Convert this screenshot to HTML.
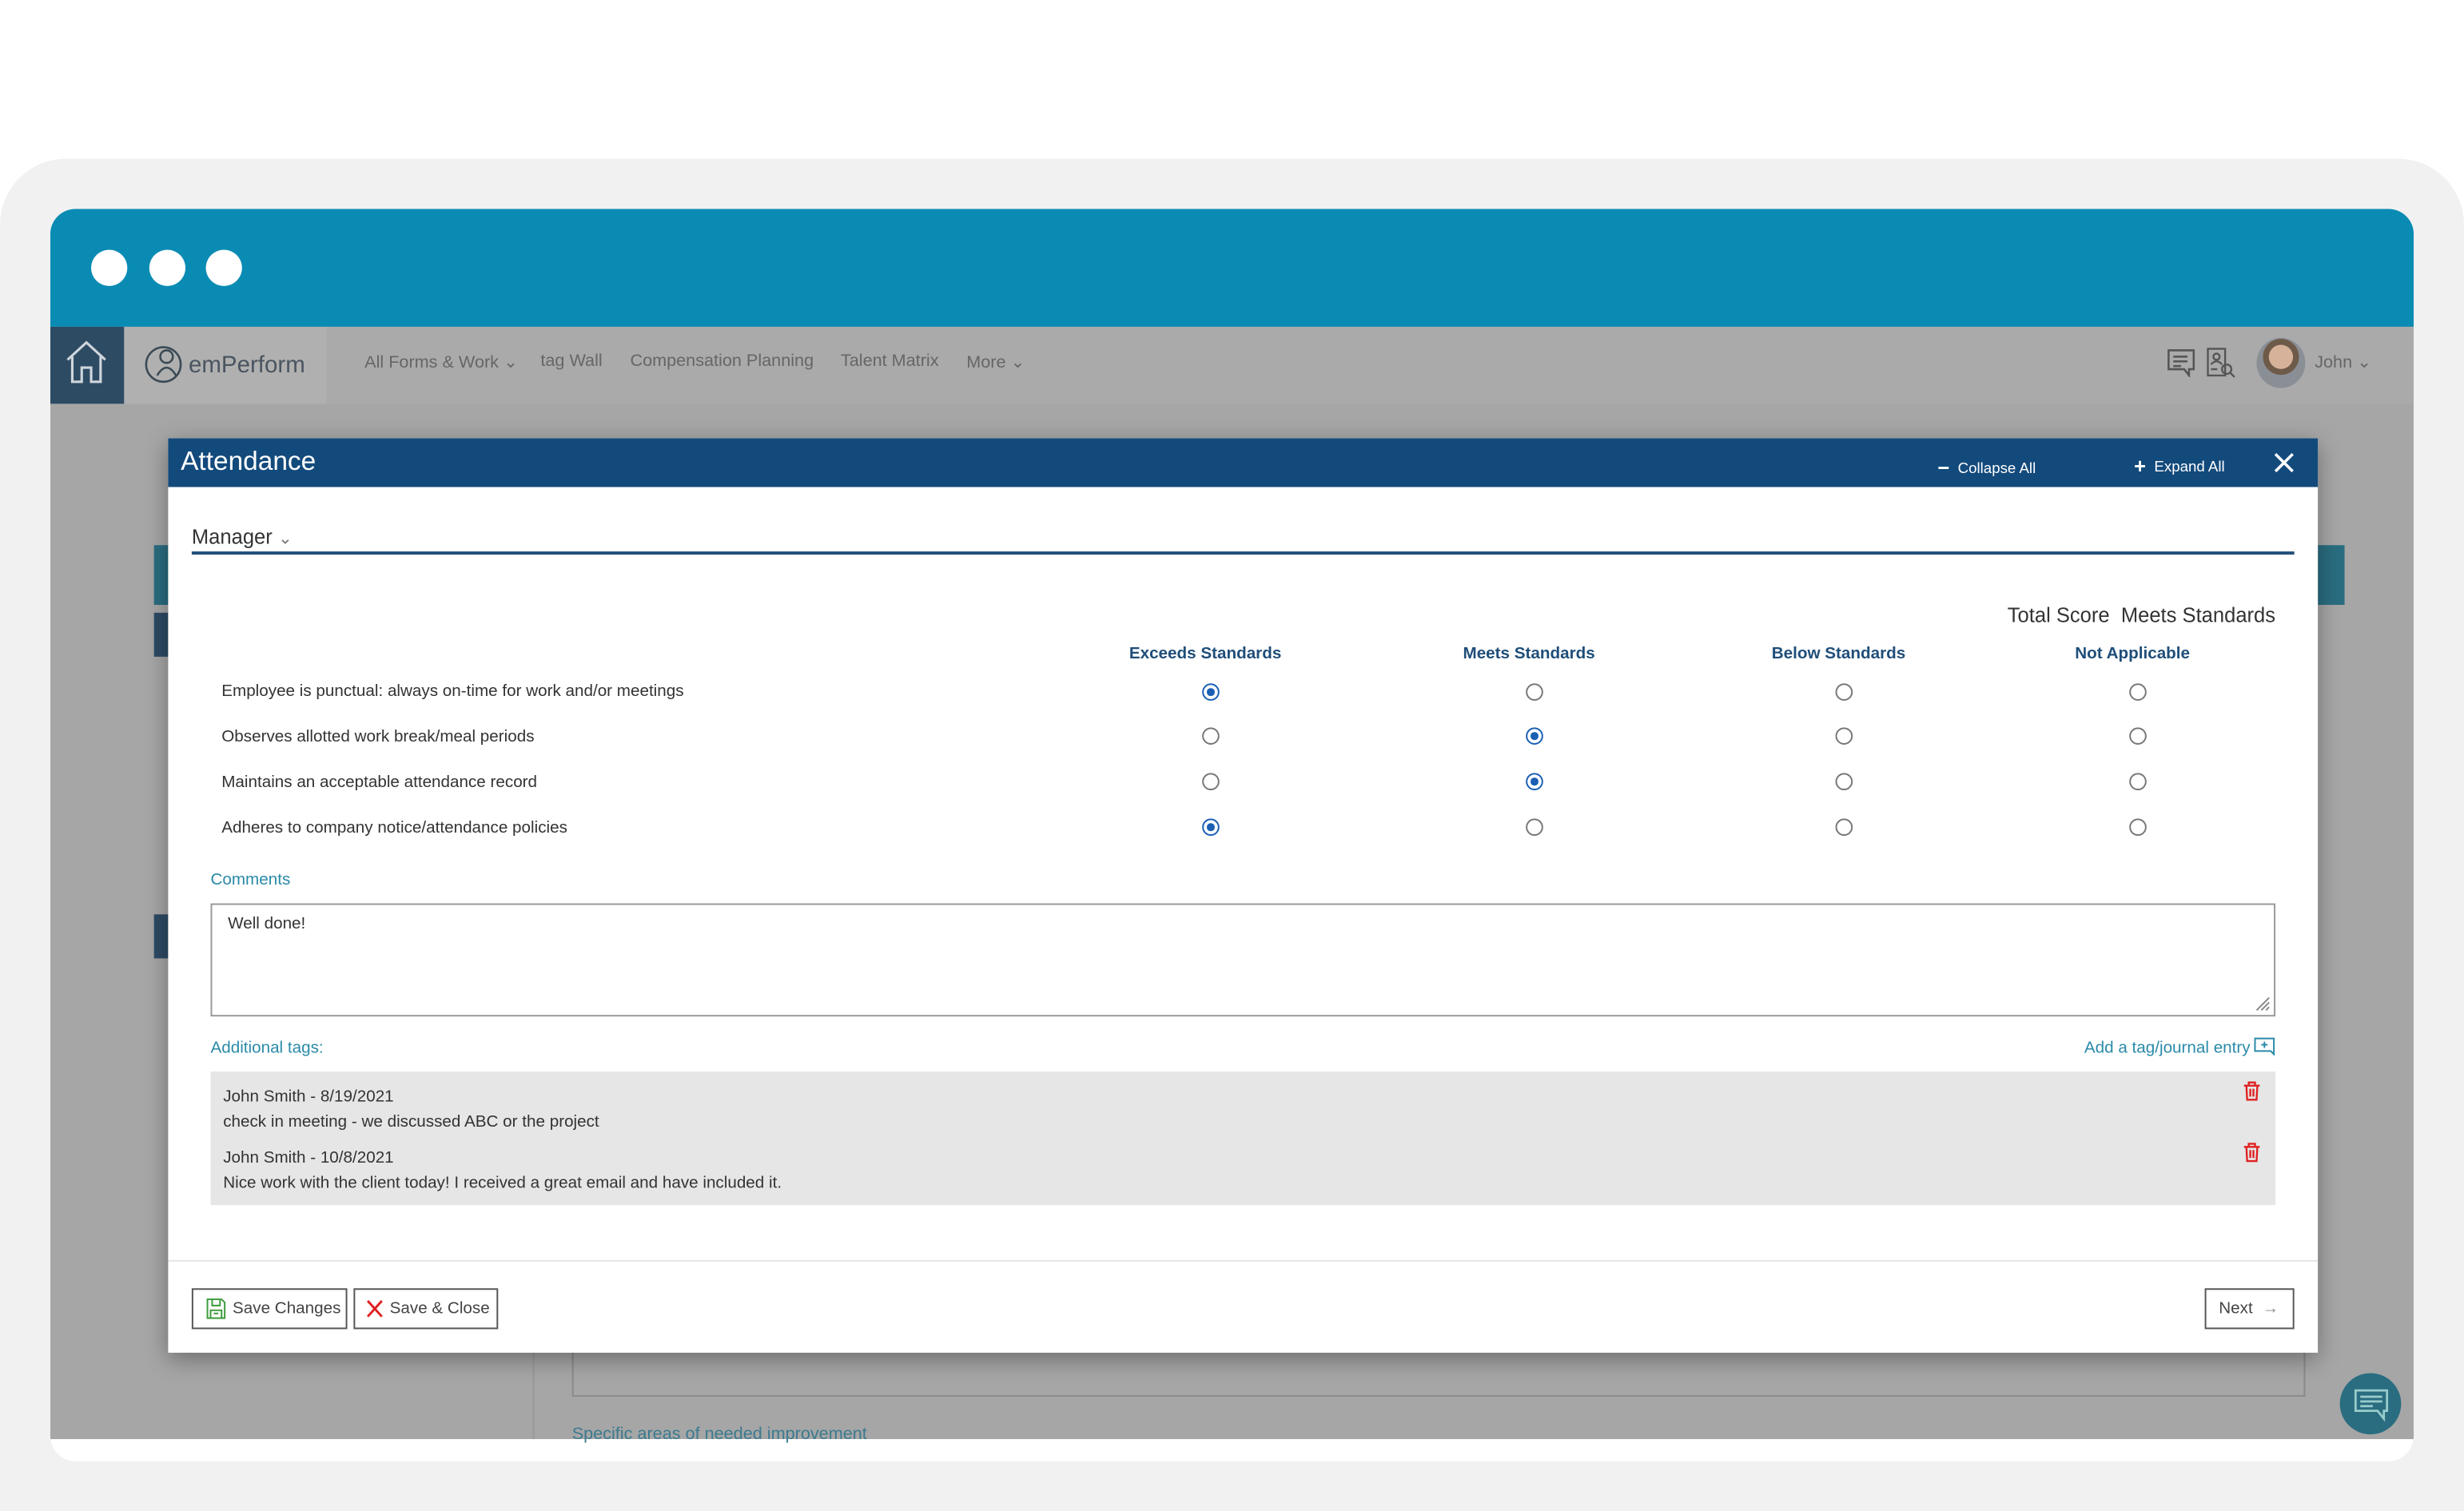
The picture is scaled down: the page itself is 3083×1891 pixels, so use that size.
<!DOCTYPE html>
<html><head><meta charset="utf-8"><style>
*{margin:0;padding:0;box-sizing:border-box}
html,body{width:3083px;height:1891px;overflow:hidden;background:#fff;font-family:"Liberation Sans",sans-serif}
#s{position:absolute;left:0;top:0;width:1568px;height:962px;transform:scale(1.96620);transform-origin:0 0}
.a{position:absolute}
.t{position:absolute;white-space:nowrap}
.r{position:absolute;width:11px;height:11px;border:1.3px solid #777;border-radius:50%;background:#fff}
.r.on{border-color:#1a5fb4}
.r.on:after{content:"";position:absolute;left:2px;top:2px;width:4.5px;height:4.5px;border-radius:50%;background:#1a5fb4}
.btn{position:absolute;border:1px solid #555;background:#fff;height:26px;font-size:10.5px;color:#444;display:flex;align-items:center}
</style></head><body><div id="s">
<div class="a" style="left:0;top:101px;width:1568px;height:861px;background:#f1f1f1;border-radius:42px 42px 0 0"></div>
<div class="a" style="left:32px;top:133px;width:1504px;height:797px;background:#fff;border-radius:16px;overflow:hidden">
  <div class="a" style="left:0;top:0;width:1504px;height:75px;background:#0a8bb3"></div>
  <div class="a" style="left:0;top:75px;width:1504px;height:708px;background:#a6a6a6"></div>
  <div class="a" style="left:0;top:75px;width:1504px;height:49px;background:#aaaaaa"></div>
  <div class="a" style="left:0;top:75px;width:47px;height:49px;background:#2e4b64"></div>
  <div class="a" style="left:47px;top:75px;width:129px;height:49px;background:#b0b0b0"></div>
</div>
<div class="a" style="left:58px;top:159px;width:23px;height:23px;border-radius:50%;background:#fff"></div>
<div class="a" style="left:95px;top:159px;width:23px;height:23px;border-radius:50%;background:#fff"></div>
<div class="a" style="left:131px;top:159px;width:23px;height:23px;border-radius:50%;background:#fff"></div>
<svg class="a" style="left:41px;top:216px" width="28" height="30" viewBox="0 0 28 30" fill="none" stroke="#cfd6dc" stroke-width="1.6"><path d="M2 13 L14 2 L26 13 M5 11 V27 H11 V18 H17 V27 H23 V11"/></svg>
<svg class="a" style="left:91px;top:219px" width="30" height="26" viewBox="0 0 30 26" fill="none" stroke="#3a4a55" stroke-width="1.3"><circle cx="13" cy="13" r="11"/><circle cx="15" cy="8" r="4"/><path d="M9 20 q6 -10 12 0"/></svg>
<div class="t" style="left:120px;top:224px;font-size:15px;color:#4a5560">emPerform</div>
<div class="t" style="left:232px;top:224px;font-size:11px;color:#666">All Forms &amp; Work ⌄</div>
<div class="t" style="left:344px;top:224px;font-size:11px;color:#666">tag Wall</div>
<div class="t" style="left:401px;top:224px;font-size:11px;color:#666">Compensation Planning</div>
<div class="t" style="left:535px;top:224px;font-size:11px;color:#666">Talent Matrix</div>
<div class="t" style="left:615px;top:224px;font-size:11px;color:#666">More ⌄</div>
<svg class="a" style="left:1379px;top:222px" width="18" height="18" viewBox="0 0 18 18" fill="none" stroke="#555" stroke-width="1.3"><path d="M1 1 H17 V13 H14 V17 L11 13 H1 Z M4 5 H13 M4 8 H13 M4 11 H9"/></svg>
<svg class="a" style="left:1404px;top:221px" width="20" height="20" viewBox="0 0 20 20" fill="none" stroke="#555" stroke-width="1.2"><rect x="1" y="1" width="11" height="17"/><circle cx="6.5" cy="6" r="2"/><path d="M3 11 q3.5 -4 7 0 M3 14 H7"/><circle cx="13" cy="14" r="3"/><path d="M15 16 L18 19"/></svg>
<div class="a" style="left:1436px;top:215px;width:31px;height:32px;border-radius:50%;background:radial-gradient(circle at 50% 38%,#d7b29a 0 30%,#6e5a48 31% 45%,#8a8f96 46%)"></div>
<div class="t" style="left:1473px;top:224px;font-size:11px;color:#666">John ⌄</div>
<div class="a" style="left:98px;top:347px;width:9px;height:38px;background:#2a6d80"></div>
<div class="a" style="left:1475px;top:347px;width:17px;height:38px;background:#2a6d80"></div>
<div class="a" style="left:98px;top:390px;width:9px;height:28px;background:#2d4a64"></div>
<div class="a" style="left:98px;top:582px;width:9px;height:28px;background:#2d4a64"></div>
<div class="a" style="left:364px;top:855px;width:1103px;height:34px;border:1px solid #8a8a8a;border-top:none"></div>
<div class="a" style="left:339px;top:861px;width:1px;height:55px;background:#999"></div>
<div class="t" style="left:364px;top:907px;font-size:11px;color:#3b7a8f">Specific areas of needed improvement</div>
<div class="a" style="left:1489px;top:874px;width:39px;height:39px;border-radius:50%;background:#2a6d80"></div>
<svg class="a" style="left:1497px;top:883px" width="24" height="22" viewBox="0 0 24 22" fill="none" stroke="#9cc" stroke-width="1.4"><path d="M2 2 H22 V15 H20 V20 L16 15 H2 Z M5 6 H19 M5 9 H19 M5 12 H13"/></svg>
<div class="a" style="left:107px;top:279px;width:1368px;height:582px;background:#fff;box-shadow:0 4px 14px rgba(0,0,0,.35)">
  <div class="a" style="left:0;top:0;width:1368px;height:31px;background:#134a7c"></div>
  <div class="t" style="left:8px;top:5px;font-size:17px;color:#fff">Attendance</div>
  <div class="t" style="left:1126px;top:10px;font-size:9.5px;color:#fff"><b style="font-size:13px;position:relative;top:1px">−</b>&nbsp; Collapse All</div>
  <div class="t" style="left:1251px;top:9px;font-size:9.5px;color:#fff"><b style="font-size:13px;position:relative;top:1px">+</b>&nbsp; Expand All</div>
  <svg class="a" style="left:1340px;top:9px" width="13" height="13" viewBox="0 0 13 13" stroke="#fff" stroke-width="1.8"><path d="M1 1 L12 12 M12 1 L1 12"/></svg>
  <div class="t" style="left:15px;top:55px;font-size:13px;color:#333">Manager <span style="color:#777;font-size:11px">⌄</span></div>
  <div class="a" style="left:15px;top:72px;width:1338px;height:2px;background:#1f4e79"></div>
  <div class="t" style="right:27px;top:105px;font-size:13px;color:#333">Total Score&nbsp; Meets Standards</div>
  <div class="t" style="left:660px;top:131px;width:0;font-size:10.5px;font-weight:bold;color:#1f4e79"><span style="position:absolute;transform:translateX(-50%)">Exceeds Standards</span></div>
  <div class="t" style="left:866px;top:131px;width:0;font-size:10.5px;font-weight:bold;color:#1f4e79"><span style="position:absolute;transform:translateX(-50%)">Meets Standards</span></div>
  <div class="t" style="left:1063px;top:131px;width:0;font-size:10.5px;font-weight:bold;color:#1f4e79"><span style="position:absolute;transform:translateX(-50%)">Below Standards</span></div>
  <div class="t" style="left:1250px;top:131px;width:0;font-size:10.5px;font-weight:bold;color:#1f4e79"><span style="position:absolute;transform:translateX(-50%)">Not Applicable</span></div>
  <div class="t" style="left:34px;top:155px;font-size:10.5px;color:#333">Employee is punctual: always on-time for work and/or meetings</div>
  <div class="t" style="left:34px;top:184px;font-size:10.5px;color:#333">Observes allotted work break/meal periods</div>
  <div class="t" style="left:34px;top:213px;font-size:10.5px;color:#333">Maintains an acceptable attendance record</div>
  <div class="t" style="left:34px;top:242px;font-size:10.5px;color:#333">Adheres to company notice/attendance policies</div>
  <div class="r on" style="left:658px;top:156px"></div><div class="r" style="left:864px;top:156px"></div><div class="r" style="left:1061px;top:156px"></div><div class="r" style="left:1248px;top:156px"></div>
  <div class="r" style="left:658px;top:184px"></div><div class="r on" style="left:864px;top:184px"></div><div class="r" style="left:1061px;top:184px"></div><div class="r" style="left:1248px;top:184px"></div>
  <div class="r" style="left:658px;top:213px"></div><div class="r on" style="left:864px;top:213px"></div><div class="r" style="left:1061px;top:213px"></div><div class="r" style="left:1248px;top:213px"></div>
  <div class="r on" style="left:658px;top:242px"></div><div class="r" style="left:864px;top:242px"></div><div class="r" style="left:1061px;top:242px"></div><div class="r" style="left:1248px;top:242px"></div>
  <div class="t" style="left:27px;top:275px;font-size:10.5px;color:#2a8aa8">Comments</div>
  <div class="a" style="left:27px;top:296px;width:1314px;height:72px;border:1px solid #999"></div>
  <div class="t" style="left:38px;top:303px;font-size:10.5px;color:#333">Well done!</div>
  <svg class="a" style="left:1328px;top:355px" width="10" height="10" stroke="#888"><path d="M1 9 L9 1 M4 9 L9 4 M7 9 L9 7"/></svg>
  <div class="t" style="left:27px;top:382px;font-size:10.5px;color:#2a8aa8">Additional tags:</div>
  <div class="t" style="right:43px;top:382px;font-size:10.5px;color:#2a8aa8">Add a tag/journal entry</div>
  <svg class="a" style="left:1327px;top:381px" width="14" height="13" fill="none" stroke="#2a8aa8" stroke-width="1"><path d="M1 1 H13 V11 L11 9 H1 Z M7 3 V7 M5 5 H9"/></svg>
  <div class="a" style="left:27px;top:403px;width:1314px;height:85px;background:#e6e6e6"></div>
  <div class="t" style="left:35px;top:413px;font-size:10.5px;color:#333">John Smith - 8/19/2021</div>
  <div class="t" style="left:35px;top:429px;font-size:10.5px;color:#333">check in meeting - we discussed ABC or the project</div>
  <div class="t" style="left:35px;top:452px;font-size:10.5px;color:#333">John Smith - 10/8/2021</div>
  <div class="t" style="left:35px;top:468px;font-size:10.5px;color:#333">Nice work with the client today! I received a great email and have included it.</div>
  <svg class="a" style="left:1320px;top:409px" width="12" height="13" fill="none" stroke="#e02020" stroke-width="1.2"><path d="M1 3 H11 M4 3 V1 H8 V3 M2.5 3 L3 12 H9 L9.5 3 M5 5 V10 M7 5 V10"/></svg>
  <svg class="a" style="left:1320px;top:448px" width="12" height="13" fill="none" stroke="#e02020" stroke-width="1.2"><path d="M1 3 H11 M4 3 V1 H8 V3 M2.5 3 L3 12 H9 L9.5 3 M5 5 V10 M7 5 V10"/></svg>
  <div class="a" style="left:0;top:523px;width:1368px;height:1px;background:#e5e5e5"></div>
  <div class="btn" style="left:15px;top:541px;width:99px"><svg style="margin:0 4px 0 8px" width="13" height="14" fill="none" stroke="#3a9a3a" stroke-width="1"><path d="M1 1 H10 L12 3 V13 H1 Z M4 1 V5 H9 V1 M3 8 H10 V13 H3 Z M5 10 H8"/></svg>Save Changes</div>
  <div class="btn" style="left:118px;top:541px;width:92px"><svg style="margin:0 4px 0 7px" width="11" height="12" stroke="#e02020" stroke-width="1.5"><path d="M1 1 L10 11 M10 1 L1 11"/></svg>Save &amp; Close</div>
  <div class="btn" style="left:1296px;top:541px;width:57px;padding-left:8px">Next <span style="color:#888;margin-left:6px">→</span></div>
</div>
</div></body></html>
